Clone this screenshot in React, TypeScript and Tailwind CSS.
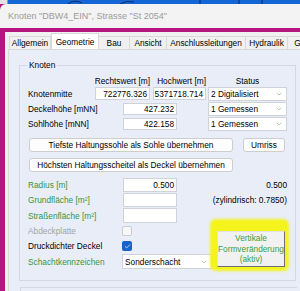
import { ChevronDown, Check } from "lucide-react";

interface BoxProps {
  value?: string;
  className?: string;
}

const TextBox = ({ value, className = "" }: BoxProps) => (
  <div
    className={`flex items-center justify-end border border-[#cfd2d8] bg-white pr-[2px] text-black ${className}`}
  >
    {value}
  </div>
);

const Combo = ({ value, className = "" }: BoxProps) => (
  <div
    className={`flex items-center justify-between border border-[#cfd2d8] bg-white pl-[2px] pr-[3px] text-black ${className}`}
  >
    <span>{value}</span>
    <ChevronDown size={8} strokeWidth={1.5} className="text-[#8a8a8a]" />
  </div>
);

const Button = ({ value, className = "" }: BoxProps) => (
  <div
    className={`flex items-center justify-center rounded-[3px] border border-[#cdcdcd] bg-[#fdfdfd] text-black ${className}`}
  >
    {value}
  </div>
);

const tabs = [
  { name: "Allgemein", w: "w-[42px]" },
  { name: "Geometrie", w: "w-[48px]", active: true },
  { name: "Bau", w: "w-[32px]" },
  { name: "Ansicht", w: "w-[38px]" },
  { name: "Anschlussleitungen", w: "w-[80px]" },
  { name: "Hydraulik", w: "w-[43px]" },
  { name: "Geb", w: "w-[30px]" },
];

const App = () => {
  return (
    <div className="flex h-[291px] w-[300px] flex-col overflow-hidden whitespace-nowrap bg-[#b5167f] font-['Liberation_Sans',Arial,sans-serif] text-[8.3px] leading-[10px]">
      {/* desktop strip behind the window */}
      <div className="flex h-[4px] shrink-0">
        <div className="w-[8px] border-r border-[#9a9a9a] bg-[#e2e2e2]" />
        <div className="flex-1 bg-[#1466d6]">
          <svg width="292" height="4" viewBox="0 0 292 4" className="block">
            <path d="M60 4 Q66 -1 74 3" stroke="#0b2a5c" strokeWidth="1" fill="none" />
            <path d="M112 4 Q118 0 126 2" stroke="#0b2a5c" strokeWidth="1" fill="none" />
            <path d="M192 0 V4 M231 0 V4 M254 0 V4" stroke="#0b2a5c" strokeWidth="1" />
          </svg>
        </div>
      </div>

      {/* title bar */}
      <div className="flex h-[24px] shrink-0 items-center rounded-tl-[6px] bg-[#f3f3f3] pl-[8px] text-[9px] text-[#9b9b9b]">
        Knoten "DBW4_EIN", Strasse "St 2054"
      </div>

      <div className="h-[4px] shrink-0" />

      {/* window body */}
      <div className="ml-[5px] flex flex-1 flex-col bg-[#f0f0f0] pl-[3px]">
        {/* tab strip */}
        <div className="flex h-[17px] shrink-0 items-end overflow-hidden pl-[2px]">
          {tabs.map((tab) =>
            tab.active ? (
              <div
                key={tab.name}
                className={`relative z-10 -mb-px flex h-[17px] shrink-0 items-center justify-center border border-b-0 border-[#d9d9d9] bg-white text-black ${tab.w}`}
              >
                {tab.name}
              </div>
            ) : (
              <div
                key={tab.name}
                className={`-ml-px flex h-[13px] shrink-0 items-center justify-center border border-b-0 border-[#d9d9d9] bg-[#f0f0f0] text-black ${tab.w}`}
              >
                {tab.name}
              </div>
            )
          )}
        </div>

        {/* tab page */}
        <div className="flex flex-1 flex-col border-l border-t border-[#d9d9d9] bg-[#e9edf8] pl-[10px]">
          <div className="relative mt-[15px] flex h-[216px] w-[277px] shrink-0 flex-col border border-[#d4d8e2] pl-[8px]">
            <span className="absolute left-[7px] top-[-6px] bg-[#e9edf8] px-[2px] text-black">
              Knoten
            </span>

            {/* column headers */}
            <div className="mt-[9px] flex h-[11px] items-center text-black">
              <div className="w-[67px]" />
              <div className="flex w-[55px] justify-end">Rechtswert [m]</div>
              <div className="flex w-[56px] justify-end">Hochwert [m]</div>
              <div className="ml-[2px] w-[79px] text-center">Status</div>
            </div>

            <div className="mt-[1px] flex h-[13px] items-center">
              <div className="w-[67px] text-black">Knotenmitte</div>
              <TextBox value="722776.326" className="h-[13px] w-[55px]" />
              <TextBox value="5371718.714" className="ml-[3px] h-[13px] w-[53px]" />
              <Combo value="2 Digitalisiert" className="ml-[2px] h-[14px] w-[79px]" />
            </div>

            <div className="mt-[2px] flex h-[13px] items-center">
              <div className="w-[95px] text-black">Deckelhöhe [mNN]</div>
              <TextBox value="427.232" className="h-[12px] w-[54px]" />
              <Combo value="1 Gemessen" className="ml-[31px] h-[14px] w-[79px]" />
            </div>

            <div className="mt-[2px] flex h-[13px] items-center">
              <div className="w-[95px] text-black">Sohlhöhe [mNN]</div>
              <TextBox value="422.158" className="h-[12px] w-[54px]" />
              <Combo value="1 Gemessen" className="ml-[31px] h-[14px] w-[79px]" />
            </div>

            <div className="mt-[8px] flex h-[14px] items-center">
              <Button
                value="Tiefste Haltungssohle als Sohle übernehmen"
                className="ml-[1px] h-[14px] w-[204px]"
              />
              <Button value="Umriss" className="ml-[10px] h-[14px] w-[42px]" />
            </div>

            <div className="mt-[6px] flex h-[14px] items-center">
              <Button
                value="Höchsten Haltungsscheitel als Deckel übernehmen"
                className="ml-[1px] h-[14px] w-[204px]"
              />
            </div>

            <div className="mt-[6px] flex h-[14px] items-center">
              <div className="w-[95px] text-[#37953d]">Radius [m]</div>
              <TextBox value="0.500" className="h-[14px] w-[54px]" />
              <div className="w-[110px] text-right text-black">0.500</div>
            </div>

            <div className="mt-[1px] flex h-[14px] items-center">
              <div className="w-[95px] text-[#37953d]">Grundfläche [m²]</div>
              <TextBox className="h-[14px] w-[54px]" />
              <div className="w-[110px] text-right text-black">(zylindrisch: 0.7850)</div>
            </div>

            <div className="mt-[1px] flex h-[15px] items-center">
              <div className="w-[95px] text-[#37953d]">Straßenfläche [m²]</div>
              <TextBox className="h-[15px] w-[54px]" />
            </div>

            <div className="flex">
              <div className="flex w-[184px] flex-col">
                <div className="mt-[1px] flex h-[14px] items-center">
                  <div className="w-[94px] text-[#a3a3a3]">Abdeckplatte</div>
                  <div className="h-[10px] w-[10px] rounded-[2px] border border-[#c9ccd3] bg-[#f7f7f7]" />
                </div>
                <div className="mt-[1px] flex h-[14px] items-center">
                  <div className="w-[94px] text-black">Druckdichter Deckel</div>
                  <div className="flex h-[10px] w-[10px] items-center justify-center rounded-[2px] bg-[#1764c8]">
                    <Check size={7} strokeWidth={2.5} className="text-white" />
                  </div>
                </div>
                <div className="mt-[1px] flex h-[15px] items-center">
                  <div className="w-[94px] text-[#37953d]">Schachtkennzeichen</div>
                  <Combo value="Sonderschacht" className="h-[15px] w-[90px]" />
                </div>
              </div>

              <div className="-mt-[2px] h-[48px] w-[75px] rounded-[4px] bg-[#f4f41c] pl-[5px] pt-[10px] shadow-[0_0_3px_2px_#f4f41c]">
                <div className="flex h-[36px] w-[68px] flex-col items-center justify-center border border-[#e2e2e2] border-b-[#6f6f6f] border-r-[#6f6f6f] bg-[#f1f1f1] text-center leading-[10.5px] text-[#3a9e46]">
                  <span>Vertikale</span>
                  <span>Formveränderung</span>
                  <span>(aktiv)</span>
                </div>
              </div>
            </div>
          </div>

          <div className="ml-[1px] mt-[6px] h-[20px] w-[277px] border-l border-t border-[#d4d8e2]" />
        </div>
      </div>
    </div>
  );
};

export default App;
